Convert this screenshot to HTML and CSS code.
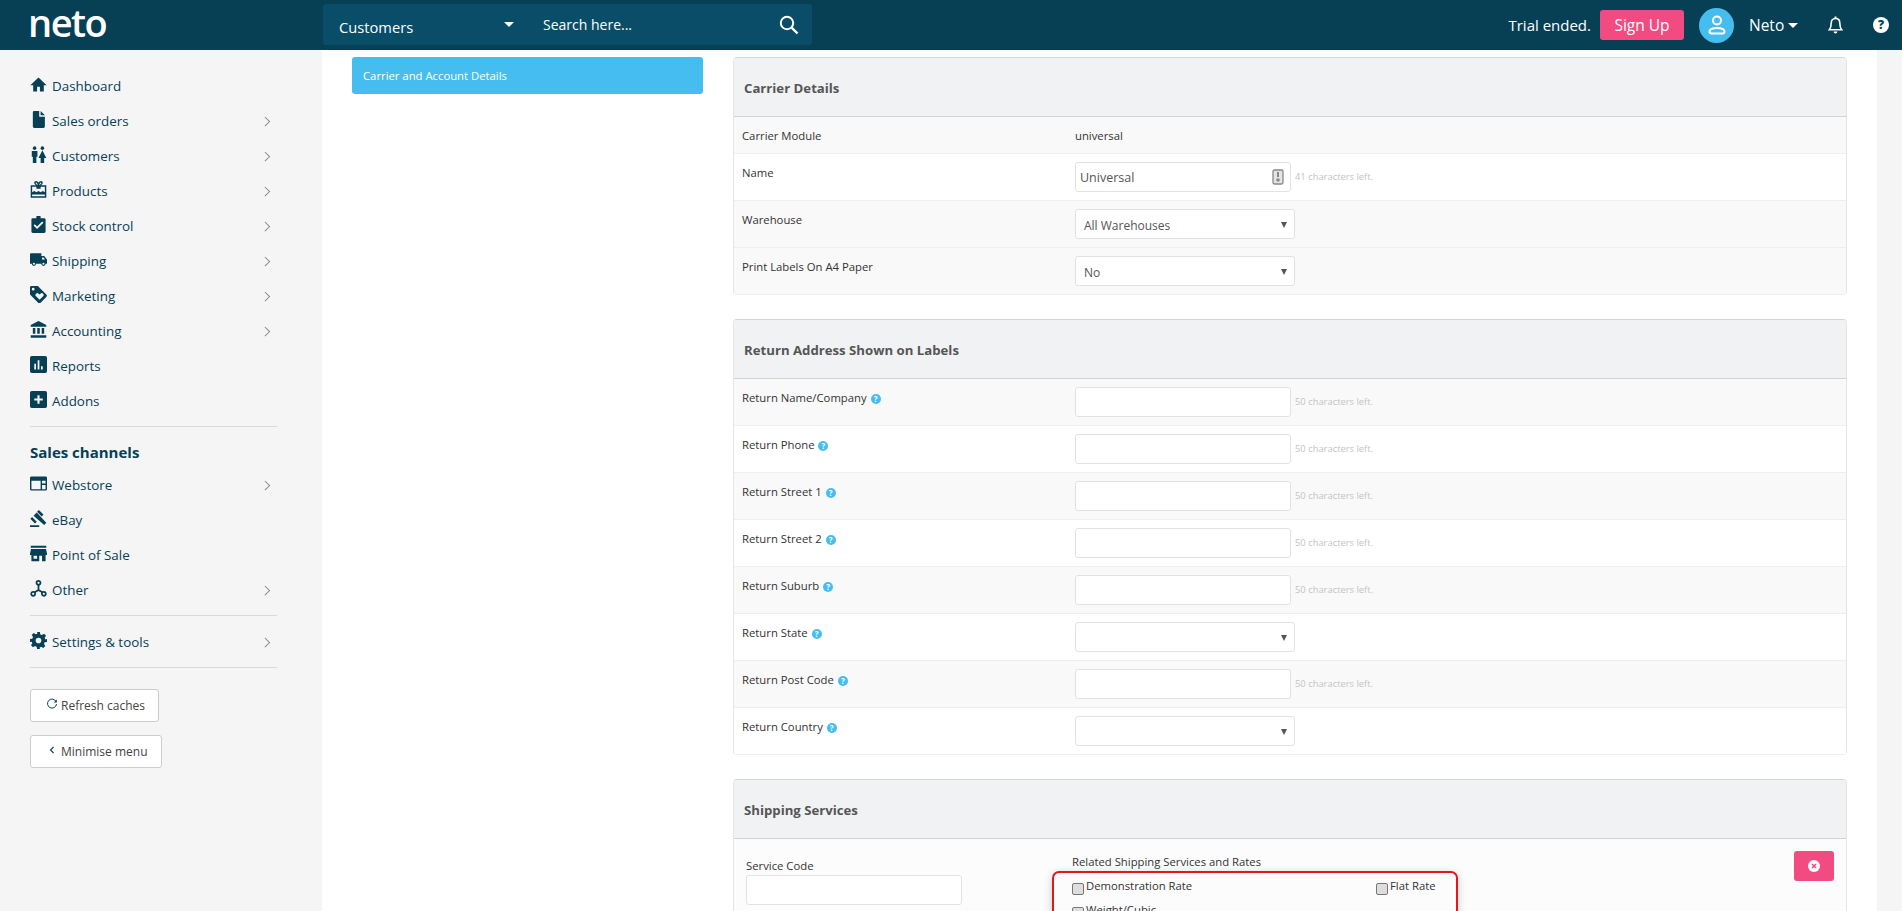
FILE: index.html
```html
<!DOCTYPE html>
<html lang="en">
<head>
<meta charset="utf-8">
<title>Carrier and Account Details</title>
<link rel="stylesheet" href="styles.css">
</head>
<body>
<svg class="defs" width="0" height="0" aria-hidden="true">
  <symbol id="i-home" viewBox="0 0 24 24"><path d="M10 22v-7h4v7h5.500v-9H23.500L12 2 .5 13H4.500v9z"/></symbol>
  <symbol id="i-file" viewBox="0 0 24 24"><path d="M13 0H6a2 2 0 0 0-2 2v20a2 2 0 0 0 2 2h13a2 2 0 0 0 2-2V8h-8z"/><path d="M15 0l6 6h-6z"/></symbol>
  <symbol id="i-people" viewBox="0 0 24 24"><circle cx="6.500" cy="3" r="2.500"/><circle cx="17.500" cy="3" r="2.500"/><path d="M2.500 7h8v8H9v9H4v-9H2.500z"/><path d="M17.500 6l5.500 11h-3v7h-5v-7h-3z"/></symbol>
  <symbol id="i-gift" viewBox="0 0 24 24"><path fill-rule="evenodd" d="M1 6h7.500C7 5 6 3.800 6 2.500 6 1 7 0 8.500 0c1.500 0 2.700 1 3.500 2.500C12.800 1 14 0 15.500 0 17 0 18 1 18 2.500 18 3.800 17 5 15.500 6H23v17.500H1zM3 8v8l3-2 3 2 3-2 3 2 3-2 3 2V8h-6v3H9V8zm0 11v2.500h18V19zM8.500 2C8 2 8 2.300 8 2.500 8 3.800 9.500 5 11 6 10.700 4.500 9.800 2 8.500 2zm7 0C14.200 2 13.300 4.500 13 6c1.500-1 3-2.200 3-3.500 0-.2 0-.5-.5-.5z"/></symbol>
  <symbol id="i-clip" viewBox="0 0 24 24"><path fill-rule="evenodd" d="M4 3h5V1.500a3 3 0 0 1 6 0V3h5a2 2 0 0 1 2 2v17a2 2 0 0 1-2 2H4a2 2 0 0 1-2-2V5a2 2 0 0 1 2-2zm6 15.500l9-9-1.800-1.800-7.200 7.200-3.200-3.200L5 13.500z"/></symbol>
  <symbol id="i-truck" viewBox="0 0 24 24"><path fill-rule="evenodd" d="M1.500 3H16v4h4l4 5v6h-2a3 3 0 0 1-6 0H8.500a3 3 0 0 1-6 0H0V4.500A1.500 1.500 0 0 1 1.500 3zM17 9v3h4.500L19 9zM5.500 19.500a1.500 1.500 0 1 0 0-3 1.500 1.500 0 0 0 0 3zm13.500 0a1.500 1.500 0 1 0 0-3 1.500 1.500 0 0 0 0 3z"/></symbol>
  <symbol id="i-tag" viewBox="0 0 24 24"><path fill-rule="evenodd" d="M2 0h9l12 12a2.500 2.500 0 0 1 0 3.500L15 23.500a2.500 2.500 0 0 1-3.500 0L0 12V2a2 2 0 0 1 2-2zm2.500 6.500a2 2 0 1 0 0-4 2 2 0 0 0 0 4zM13.500 19.500l5-5a2.600 2.600 0 0 0-3.700-3.700l-1.300 1.300-1.300-1.300a2.600 2.600 0 0 0-3.700 3.700z"/></symbol>
  <symbol id="i-bank" viewBox="0 0 24 24"><path d="M4 10h3.500v8H4zm6.200 0h3.600v8h-3.600zm6.300 0H20v8h-3.500zM1 20h22v3.500H1zM12 0L1 5.500V8h22V5.500z"/></symbol>
  <symbol id="i-bars" viewBox="0 0 24 24"><path fill-rule="evenodd" d="M2.500 0h19A2.500 2.500 0 0 1 24 2.500v19a2.500 2.500 0 0 1-2.500 2.500h-19A2.500 2.500 0 0 1 0 21.500v-19A2.500 2.500 0 0 1 2.500 0zM6 11v8h2.500v-8zm4.800-5v13h2.500V6zm4.700 8.500V19H18v-4.500z"/></symbol>
  <symbol id="i-plus" viewBox="0 0 24 24"><path fill-rule="evenodd" d="M2.500 0h19A2.500 2.500 0 0 1 24 2.500v19a2.500 2.500 0 0 1-2.500 2.500h-19A2.500 2.500 0 0 1 0 21.500v-19A2.500 2.500 0 0 1 2.500 0zM10.500 6v4.500H6v3h4.500V18h3v-4.500H18v-3h-4.500V6z"/></symbol>
  <symbol id="i-window" viewBox="0 0 24 24"><path fill-rule="evenodd" d="M2 2h20a2 2 0 0 1 2 2v16a2 2 0 0 1-2 2H2a2 2 0 0 1-2-2V4a2 2 0 0 1 2-2zm0 6v12h13V8zm15 0v4h5V8zm0 6v6h5v-6z"/></symbol>
  <symbol id="i-gavel" viewBox="0 0 24 24"><path d="M0 21.500h13V24H0zM5 8l4.500-4.500L23 18l-3 3zM12.500 0l6.500 6.500-2.500 2.500L10 2.500zM3 10l6.500 6.500L7 19 .5 12.500z"/></symbol>
  <symbol id="i-store" viewBox="0 0 24 24"><path fill-rule="evenodd" d="M1 1h22v3H1zM1.500 5.500h21L24 12v2h-2v9h-5v-8h-4v8H2v-9H0v-2zM5 15v4.500h5V15z"/></symbol>
  <symbol id="i-nodes" viewBox="0 0 24 24"><g fill="none" stroke="currentColor" stroke-width="2.400"><circle cx="12" cy="4" r="2.800"/><circle cx="4.500" cy="19.500" r="2.800"/><circle cx="19.500" cy="19.500" r="2.800"/><path d="M12 7v7M12 14l-6 3.500M12 14l6 3.500"/></g></symbol>
  <symbol id="i-gear" viewBox="0 0 24 24"><path fill-rule="evenodd" d="M10 0h4l.6 3.400c.8.200 1.600.6 2.300 1L19.800 2.500l2.800 2.800-1.900 2.900c.4.700.8 1.500 1 2.300L24 10v4l-3.300.6c-.2.800-.6 1.600-1 2.300l1.900 2.900-2.800 2.800-2.900-1.900c-.7.400-1.500.8-2.300 1L14 24h-4l-.6-3.300c-.8-.2-1.600-.6-2.300-1l-2.900 1.900-2.800-2.800 1.900-2.900c-.4-.7-.8-1.500-1-2.300L0 14v-4l3.300-.6c.2-.8.600-1.600 1-2.300L2.400 4.200l2.800-2.800 2.900 1.900c.7-.4 1.500-.8 2.300-1zM12 16a4 4 0 1 0 0-8 4 4 0 0 0 0 8z"/></symbol>
</svg>

<header class="topbar">
  <div class="logo">neto</div>
  <div class="searchbox">
    <div class="search-type"><span>Customers</span><i class="caret"></i></div>
    <div class="search-text">Search here...</div>
    <svg class="search-icon" viewBox="0 0 20 20"><circle cx="8" cy="8" r="6.200" fill="none" stroke="#fff" stroke-width="2"/><path d="M12.500 12.500l6 6" stroke="#fff" stroke-width="2.400" fill="none"/></svg>
  </div>
  <div class="top-right">
    <span class="trial">Trial ended.</span>
    <a class="signup">Sign Up</a>
    <span class="avatar"><svg viewBox="0 0 24 24"><circle cx="12" cy="7.500" r="4" fill="none" stroke="#fff" stroke-width="2"/><path d="M6.500 20.500h11a2 2 0 0 0 2-2c0-2.200-3.500-3.500-7.500-3.500s-7.500 1.300-7.500 3.500a2 2 0 0 0 2 2z" fill="none" stroke="#fff" stroke-width="2"/></svg></span>
    <span class="user">Neto</span><i class="caret user-caret"></i>
    <svg class="bell" viewBox="0 0 16 19"><path d="M8 2c-3 0-4.600 2.200-4.600 5 0 3.500-.6 5.400-2 7h13.200c-1.400-1.600-2-3.500-2-7 0-2.800-1.600-5-4.600-5z" fill="none" stroke="#fff" stroke-width="1.700"/><path d="M6 16h4a2 2 0 0 1-4 0zM7 0h2v2.500H7z" fill="#fff"/></svg>
    <span class="help">?</span>
  </div>
</header>

<div class="page">
  <aside class="sidebar">
    <nav class="nav">
      <a class="nav-item"><svg class="ni"><use href="#i-home"/></svg><span>Dashboard</span></a>
      <a class="nav-item"><svg class="ni"><use href="#i-file"/></svg><span>Sales orders</span><i class="chev"></i></a>
      <a class="nav-item"><svg class="ni"><use href="#i-people"/></svg><span>Customers</span><i class="chev"></i></a>
      <a class="nav-item"><svg class="ni"><use href="#i-gift"/></svg><span>Products</span><i class="chev"></i></a>
      <a class="nav-item"><svg class="ni"><use href="#i-clip"/></svg><span>Stock control</span><i class="chev"></i></a>
      <a class="nav-item"><svg class="ni"><use href="#i-truck"/></svg><span>Shipping</span><i class="chev"></i></a>
      <a class="nav-item"><svg class="ni"><use href="#i-tag"/></svg><span>Marketing</span><i class="chev"></i></a>
      <a class="nav-item"><svg class="ni"><use href="#i-bank"/></svg><span>Accounting</span><i class="chev"></i></a>
      <a class="nav-item"><svg class="ni"><use href="#i-bars"/></svg><span>Reports</span></a>
      <a class="nav-item"><svg class="ni"><use href="#i-plus"/></svg><span>Addons</span></a>
    </nav>
    <hr class="rule rule-a">
    <div class="nav-title">Sales channels</div>
    <nav class="nav">
      <a class="nav-item"><svg class="ni"><use href="#i-window"/></svg><span>Webstore</span><i class="chev"></i></a>
      <a class="nav-item"><svg class="ni"><use href="#i-gavel"/></svg><span>eBay</span></a>
      <a class="nav-item"><svg class="ni"><use href="#i-store"/></svg><span>Point of Sale</span></a>
      <a class="nav-item"><svg class="ni"><use href="#i-nodes"/></svg><span>Other</span><i class="chev"></i></a>
    </nav>
    <hr class="rule rule-b">
    <a class="nav-item"><svg class="ni"><use href="#i-gear"/></svg><span>Settings &amp; tools</span><i class="chev"></i></a>
    <hr class="rule rule-c">
    <a class="side-btn"><svg class="side-ic" viewBox="0 0 12 12"><path d="M10 3.500A4.500 4.500 0 1 0 10.500 6" fill="none" stroke="#073f55" stroke-width="1"/><path d="M10.800 1.500v3H7.800z" fill="#073f55"/></svg>Refresh caches</a>
    <a class="side-btn"><svg class="side-ic" viewBox="0 0 12 12"><path d="M7.500 3L4.500 6l3 3" fill="none" stroke="#073f55" stroke-width="1.100"/></svg>Minimise menu</a>
  </aside>

  <main class="main">
    <div class="tabs"><a class="tab-active">Carrier and Account Details</a></div>
    <div class="content">
      <section class="panel">
        <h2 class="panel-head">Carrier Details</h2>
        <div class="row row-short"><div class="label">Carrier Module</div><div class="value">universal</div></div>
        <div class="row"><div class="label">Name</div><div class="field"><div class="input input-name">Universal<svg class="key" viewBox="0 0 12 16"><rect x="1" y="1" width="10" height="14" rx="1.500" fill="#e4e4e4" stroke="#888" stroke-width="1.300"/><path d="M6 3v5" stroke="#888" stroke-width="2"/><circle cx="6" cy="11" r="1.800" fill="#888"/></svg></div><span class="left">41 characters left.</span></div></div>
        <div class="row"><div class="label">Warehouse</div><div class="field"><div class="select">All Warehouses</div></div></div>
        <div class="row row-alt"><div class="label">Print Labels On A4 Paper</div><div class="field"><div class="select">No</div></div></div>
      </section>

      <section class="panel">
        <h2 class="panel-head">Return Address Shown on Labels</h2>
        <div class="row"><div class="label">Return Name/Company <b class="q">?</b></div><div class="field"><div class="input"></div><span class="left">50 characters left.</span></div></div>
        <div class="row"><div class="label">Return Phone <b class="q">?</b></div><div class="field"><div class="input"></div><span class="left">50 characters left.</span></div></div>
        <div class="row"><div class="label">Return Street 1 <b class="q">?</b></div><div class="field"><div class="input"></div><span class="left">50 characters left.</span></div></div>
        <div class="row"><div class="label">Return Street 2 <b class="q">?</b></div><div class="field"><div class="input"></div><span class="left">50 characters left.</span></div></div>
        <div class="row"><div class="label">Return Suburb <b class="q">?</b></div><div class="field"><div class="input"></div><span class="left">50 characters left.</span></div></div>
        <div class="row"><div class="label">Return State <b class="q">?</b></div><div class="field"><div class="select"></div></div></div>
        <div class="row"><div class="label">Return Post Code <b class="q">?</b></div><div class="field"><div class="input"></div><span class="left">50 characters left.</span></div></div>
        <div class="row"><div class="label">Return Country <b class="q">?</b></div><div class="field"><div class="select"></div></div></div>
      </section>

      <section class="panel panel-last">
        <h2 class="panel-head">Shipping Services</h2>
        <div class="service">
          <div class="svc-code"><div class="svc-label">Service Code</div><div class="input"></div></div>
          <div class="svc-rates">
            <div class="svc-title">Related Shipping Services and Rates</div>
            <div class="redbox">
              <label class="chk"><i class="box"></i>Demonstration Rate</label>
              <label class="chk"><i class="box"></i>Flat Rate</label>
              <label class="chk"><i class="box"></i>Weight/Cubic</label>
            </div>
          </div>
          <a class="del"><svg viewBox="0 0 12 12"><circle cx="6" cy="6" r="6" fill="#fff"/><path d="M4 4l4 4M8 4l-4 4" stroke="#f14b82" stroke-width="1.600"/></svg></a>
        </div>
      </section>
    </div>
  </main>
  <div class="strip"></div>
</div>
</body>
</html>
```

FILE: styles.css
```css
* { box-sizing: border-box; }
html, body { margin: 0; height: 100%; overflow: hidden; }
body { font-family: "Open Sans", "Noto Sans", sans-serif; font-size: 11.300px; color: #333; background: #f5f5f5; }
.defs { display: block; height: 0; }
i, b { font-style: normal; }

.topbar { height: 50px; background: #073f55; color: #fff; display: flex; align-items: center; padding-left: 30px; }
.logo { width: 293px; font-size: 38px; font-weight: 600; line-height: 40px; letter-spacing: -1.500px; margin: -6px 0 0 -2px; flex: none; }
.searchbox { width: 489px; height: 41px; background: #0a4d68; border-radius: 3px; display: flex; align-items: center; padding-left: 16px; margin: -1px 0 0 2px; }
.search-type { width: 204px; display: flex; align-items: center; font-size: 14.700px; padding-top: 5px; }
.search-type span { width: 165px; }
.caret { display: block; width: 0; height: 0; border-left: 5px solid transparent; border-right: 5px solid transparent; border-top: 5px solid #fff; }
.search-type .caret { margin-top: -6px; }
.search-text { width: 236px; font-size: 14px; }
.search-icon { width: 20px; height: 20px; }
.top-right { margin-left: auto; display: flex; align-items: center; font-size: 15px; padding-right: 13px; }
.trial { margin-right: 9px; }
.signup { width: 84px; height: 30px; background: #f14b82; border-radius: 3px; display: flex; align-items: center; justify-content: center; margin-right: 15px; font-size: 15.500px; }
.avatar { width: 35px; height: 35px; border-radius: 50%; background: #46bdef; display: flex; align-items: center; justify-content: center; margin-right: 15px; }
.avatar svg { width: 24px; height: 24px; }
.user { width: 39px; font-size: 15.500px; }
.user-caret { margin-right: 30px; }
.bell { width: 15px; height: 19px; margin-right: 30px; }
.help { width: 16px; height: 16px; border-radius: 50%; background: #fff; color: #073f55; font-size: 12px; font-weight: 800; line-height: 16px; text-align: center; }

.page { display: flex; height: 861px; }
.sidebar { width: 322px; flex: none; padding: 18px 0 0 30px; background: #f5f5f5; }
.nav-item { display: flex; align-items: center; width: 247px; height: 35px; font-size: 13.400px; color: #073f55; }
.ni { width: 17px; height: 17px; fill: #073f55; color: #073f55; margin-right: 5px; flex: none; margin-top: -3px; }
.nav-item span { flex: 1; }
.chev { width: 6.500px; height: 6.500px; border-top: 1.300px solid #888; border-right: 1.300px solid #888; transform: rotate(45deg); margin: 2px 9px 0 0; }
.rule { border: 0; border-top: 1px solid #d9d9d9; width: 247px; margin: 0; }
.rule-a { margin-top: 8px; }
.rule-b { margin-top: 8px; }
.rule-c { margin-top: 8px; }
.rule-b + .nav-item { margin-top: 8px; }
.nav-title { font-size: 15px; font-weight: 700; color: #073f55; height: 40px; padding-top: 14px; line-height: 22px; }
.side-btn { display: flex; align-items: center; width: max-content; height: 33px; padding: 0 13px 0 15px; background: #fff; border: 1px solid #ccc; border-radius: 3px; font-size: 12px; color: #444; margin-top: 13px; }
.rule-c + .side-btn { margin-top: 21px; }
.side-ic { width: 12px; height: 12px; margin-right: 3px; margin-top: -3px; }

.main { flex: 1; background: #fff; display: flex; padding: 7px 30px 0 30px; overflow: hidden; }
.tabs { width: 351px; flex: none; margin-right: 30px; }
.tab-active { display: block; height: 37px; line-height: 37px; padding-left: 11px; background: #46bdef; border-radius: 3px; color: #fff; font-size: 11.300px; font-weight: 500; }
.content { flex: 1; min-width: 0; }

.panel { border: 1px solid #e6e6e6; border-top-color: #d5d5d5; border-bottom: 0; border-radius: 4px; margin-bottom: 24px; background: #f9f9f9; overflow: hidden; }
.panel-head { margin: 0; height: 59px; background: #f1f2f4; border-bottom: 1px solid #d3d3d3; font-size: 13.200px; font-weight: 700; line-height: 61px; padding-left: 10px; color: #555; }
.row { display: flex; height: 47px; border-bottom: 1px solid #eee; padding-left: 8px; background: #fff; }
.panel-head + .row, .row:nth-child(even), .row-alt { background: #f9f9f9; }
.row-short { height: 37px; align-items: center; }
.label { width: 333px; flex: none; padding-top: 9px; line-height: 20px; color: #333; }
.row-short .label { padding-top: 1px; }
.value { color: #333; padding-top: 1px; }
.field { display: flex; align-items: flex-start; padding-top: 8px; }
.input { width: 216px; height: 30px; background: #fff; border: 1px solid #e2e2e2; border-radius: 3px; flex: none; }
.input-name { display: flex; align-items: center; justify-content: space-between; padding: 0 6px 0 4px; font-size: 12.500px; color: #555; }
.key { width: 12px; height: 16px; }
.select { position: relative; width: 220px; height: 30px; background: #fff; border: 1px solid #e2e2e2; border-radius: 3px; padding-left: 8px; line-height: 32px; color: #555; font-size: 12px; }
.select::after { content: ""; position: absolute; right: 7px; top: 12px; width: 0; height: 0; border-left: 3px solid transparent; border-right: 3px solid transparent; border-top: 6px solid #555; }
.left { font-size: 9.400px; color: #c4c4c4; margin-left: 4px; line-height: 30px; }
.q { display: inline-block; width: 10px; height: 10px; border-radius: 50%; background: #46bdef; color: #fff; font-size: 8px; font-weight: 700; line-height: 10px; text-align: center; vertical-align: 0; margin-left: 1px; }

.panel-last { margin-bottom: 0; background: #fcfcfc; height: 400px; }
.service { display: flex; align-items: flex-start; padding: 0 12px 0 12px; position: relative; }
.svc-code { width: 326px; flex: none; padding-top: 18px; }
.svc-label { line-height: 18px; }
.svc-rates { width: 406px; margin-left: -20px; padding-top: 14px; }
.svc-title { padding-left: 20px; line-height: 18px; }
.redbox { width: 406px; height: 200px; border: 2px solid #e8141c; border-radius: 7px; box-shadow: 0 2px 9px rgba(0,0,0,.2); padding: 4px 0 0 18px; display: grid; grid-template-columns: 304px 1fr; grid-auto-rows: 24px; }
.chk { display: flex; align-items: flex-start; line-height: 18px; }
.box { width: 12px; height: 12px; margin-top: 6px; background: #ddd; border: 1px solid #777; border-radius: 2px; margin-right: 2px; flex: none; }
.del { position: absolute; left: 1060px; top: 12px; width: 40px; height: 30px; background: #f14b82; border-radius: 3px; display: flex; align-items: center; justify-content: center; }
.del svg { width: 12px; height: 12px; }
.strip { width: 25px; flex: none; background: #f5f5f5; }
```
